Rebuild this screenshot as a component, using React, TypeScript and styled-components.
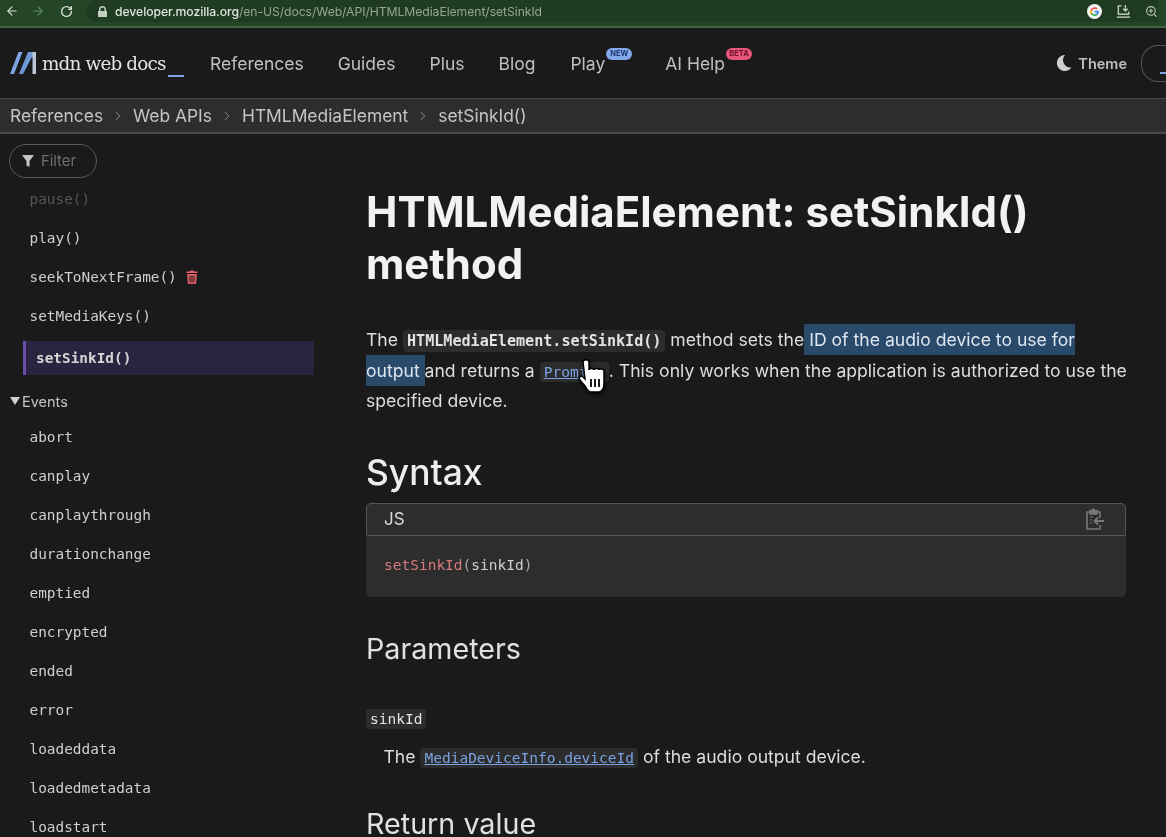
import styled, { createGlobalStyle } from "styled-components";
import { ArrowLeft, ArrowRight, ChevronRight, RotateCw, ZoomIn } from "lucide-react";

const sidebarTop = ["play()", "seekToNextFrame()", "setMediaKeys()"];
const events = [
  "abort",
  "canplay",
  "canplaythrough",
  "durationchange",
  "emptied",
  "encrypted",
  "ended",
  "error",
  "loadeddata",
  "loadedmetadata",
  "loadstart",
];
const crumbs = ["References", "Web APIs", "HTMLMediaElement", "setSinkId()"];

const GlobalStyle = createGlobalStyle`
  html, body {
    margin: 0;
    background: #1a1a1a;
    overflow: hidden;
  }
`;
const Page = styled.div`
  position: relative;
  width: 1166px;
  height: 837px;
  overflow: hidden;
  background: #1a1a1a;
  color: #e6e6e6;
  font-family: Inter, "Liberation Sans", sans-serif;
  filter: blur(0.35px);
`;
const BrowserBar = styled.div`
  height: 28px;
  box-sizing: border-box;
  display: flex;
  align-items: center;
  padding: 0 8px 4px 5px;
  background: #244526;
  border-bottom: 2px solid #3d6a3d;
  color: #c9d6c9;
`;
const BrowserButton = styled.span<{ $dim?: boolean }>`
  display: flex;
  width: 14px;
  margin-right: ${(p) => (p.$dim ? "15px" : "12px")};
  color: ${(p) => (p.$dim ? "#5f8a60" : "#d5e0d5")};
`;
const AddressPill = styled.div`
  flex: 1;
  height: 22px;
  display: flex;
  align-items: center;
  padding-left: 12px;
  border-radius: 11px 0 0 11px;
  background: #1f3c22;
  font-size: 12.2px;
  letter-spacing: -0.005em;
`;
const Host = styled.span`
  color: #dfe6df;
  font-weight: 500;
`;
const UrlPath = styled.span`
  color: #93a894;
`;
const LockIcon = styled.svg`
  width: 9px;
  height: 11px;
  margin-right: 8px;
`;
const BarIcons = styled.div`
  display: flex;
  align-items: center;
  gap: 14px;
  margin-left: auto;
  color: #bccabc;
`;
const TopNav = styled.header`
  height: 70px;
  display: flex;
  align-items: center;
  padding-left: 10px;
  background: #1a1a1a;
`;
const Logo = styled.div`
  display: flex;
  align-items: center;
  width: 200px;
`;
const LogoText = styled.span`
  margin-left: 6px;
  font-family: "DejaVu Serif", "Liberation Serif", serif;
  font-size: 18.4px;
  letter-spacing: -0.85px;
  color: #e4e4e4;
`;
const LogoCaret = styled.span`
  width: 16px;
  height: 2px;
  margin: 26px 0 0 2px;
  background: #7da5e6;
`;
const NavLinks = styled.nav`
  display: flex;
  align-items: center;
`;
const NavLink = styled.a<{ $gap: number }>`
  position: relative;
  margin-right: ${(p) => p.$gap}px;
  font-size: 17.5px;
  color: #c0c0c0;
`;
const Badge = styled.span<{ $bg: string; $ink: string }>`
  position: absolute;
  top: -5px;
  right: -27px;
  width: 26px;
  height: 12px;
  display: flex;
  align-items: center;
  justify-content: center;
  border-radius: 7px;
  background: ${(p) => p.$bg};
  color: ${(p) => p.$ink};
  font-size: 7.5px;
  font-weight: 700;
`;
const NavRight = styled.div`
  display: flex;
  align-items: center;
  margin-left: auto;
`;
const ThemeLabel = styled.span`
  margin-left: 6px;
  font-size: 14.5px;
  font-weight: 600;
  color: #c0c0c0;
`;
const SearchStub = styled.div`
  width: 24px;
  height: 35px;
  margin-left: 14px;
  position: relative;
  border: 1px solid #555;
  border-right: 0;
  border-radius: 17px 0 0 17px;

  &::after {
    content: "";
    position: absolute;
    right: 0;
    bottom: 7px;
    width: 6px;
    height: 2px;
    background: #7da5e6;
  }
`;
const Breadcrumbs = styled.div`
  height: 33px;
  display: flex;
  align-items: center;
  padding-left: 10px;
  background: #2d2d2d;
  border-top: 1px solid #4a4a4a;
  border-bottom: 2px solid #4a4a4a;
  font-size: 17.4px;
  color: #c4c4c4;
`;
const Crumb = styled.span`
  display: flex;
  align-items: center;
  white-space: nowrap;
`;
const CrumbArrow = styled.span`
  display: flex;
  width: 30px;
  justify-content: center;
  color: #9a9a9a;
`;
const Main = styled.div`
  display: flex;
  height: 703px;
`;
const Sidebar = styled.aside`
  width: 366px;
  flex: none;
  overflow: hidden;
`;
const FilterPill = styled.div`
  width: 88px;
  height: 34px;
  display: flex;
  align-items: center;
  gap: 7px;
  margin: 10px 0 0 9px;
  padding-left: 12px;
  box-sizing: border-box;
  border: 1px solid #5a5a5a;
  border-radius: 17px;
  font-size: 14.8px;
  color: #6f6f6f;
`;
const SideList = styled.ul`
  list-style: none;
  margin: 1px 0 0;
  padding: 0;
`;
const SideItem = styled.li<{ $fade?: boolean }>`
  height: 39px;
  display: flex;
  align-items: center;
  gap: 9px;
  padding-left: 29.5px;
  font-family: "DejaVu Sans Mono", "Liberation Mono", monospace;
  font-size: 14.4px;
  color: ${(p) => (p.$fade ? "#555" : "#cfcfcf")};
`;
const ActiveItem = styled.li`
  width: 291px;
  height: 34px;
  box-sizing: border-box;
  display: flex;
  align-items: center;
  margin: 6px 0 0 23px;
  padding-left: 10px;
  border-left: 3px solid #6b4fa8;
  background: #2a2440;
  font-family: "DejaVu Sans Mono", "Liberation Mono", monospace;
  font-size: 14.4px;
  font-weight: 700;
  color: #d6d6d6;
`;
const GroupTitle = styled.li`
  height: 32px;
  display: flex;
  align-items: center;
  gap: 2px;
  margin-top: 10px;
  padding-left: 10px;
  font-size: 14.5px;
  color: #c4c4c4;

  &::before {
    content: "";
    border-left: 5px solid transparent;
    border-right: 5px solid transparent;
    border-top: 8px solid #d0d0d0;
  }
`;
const Article = styled.article`
  flex: 1;
  padding-right: 36px;
`;
const Title = styled.h1`
  margin: 52px 0 0;
  font-size: 42px;
  line-height: 52px;
  font-weight: 700;
  color: #f2f2f2;
`;
const Lead = styled.p`
  margin: 35px 0 0;
  font-size: 17.6px;
  line-height: 30.5px;
  color: #dedede;
`;
const InlineCode = styled.code<{ $strong?: boolean }>`
  padding: 2px 4px;
  border-radius: 4px;
  background: #2c2c2c;
  font-family: "DejaVu Sans Mono", "Liberation Mono", monospace;
  font-size: ${(p) => (p.$strong ? "15.1px" : "14.5px")};
  font-weight: ${(p) => (p.$strong ? 700 : 400)};
  line-height: 1;
  color: #e2e2e2;
`;
const CodeLink = styled.a`
  color: #7ba2e0;
  text-decoration: underline;
`;
const Selected = styled.span`
  background: #2a4a6c;
  color: #dfe6ee;
  padding: 5px 0;
`;
const SectionTitle = styled.h2`
  margin: 34px 0 0;
  font-size: 35.4px;
  line-height: 44px;
  font-weight: 500;
  color: #ededed;
`;
const CodeBlock = styled.div`
  margin: 8px 4px 0 0;
  border-radius: 5px;
  background: #2d2d2d;
`;
const CodeHeader = styled.div`
  height: 31px;
  display: flex;
  align-items: center;
  justify-content: space-between;
  padding: 0 20px 0 17px;
  border: 1px solid #555;
  border-radius: 5px 5px 0 0;
  font-size: 17px;
  color: #d8d8d8;
`;
const CodeBody = styled.pre`
  height: 61px;
  box-sizing: border-box;
  margin: 0;
  padding: 0 0 2px 18px;
  display: flex;
  align-items: center;
  font-family: "DejaVu Sans Mono", "Liberation Mono", monospace;
  font-size: 14.5px;
  color: #a8a8a8;
`;
const FnName = styled.span`
  color: #d67a7e;
`;
const ArgName = styled.span`
  color: #cfcfcf;
`;
const SubTitle = styled.h3`
  margin: 32px 0 0;
  font-size: 28.7px;
  line-height: 40px;
  font-weight: 400;
  color: #e0e0e0;
`;
const ParamName = styled.div`
  margin-top: 39px;
  line-height: 20px;
`;
const ParamText = styled.p`
  margin: 14px 0 0 17.5px;
  font-size: 17.6px;
  line-height: 30px;
  color: #dedede;
`;
const CursorMark = styled.svg`
  position: absolute;
  left: 578px;
  top: 358px;
  width: 34px;
  height: 38px;
  filter: drop-shadow(1px 2px 2px rgba(0, 0, 0, 0.7));
`;

function LogoMark() {
  return (
    <svg width="26" height="24" viewBox="0 0 26 24">
      <path d="M0 23 L8.500 1 H12.500 L4 23Z" fill="#7da5e6" />
      <path d="M9 23 L18 1 H25 V6 H22 L13 23Z" fill="#6f97d8" />
      <path d="M22.500 1 H26 V23 H22.500Z" fill="#b9c6d8" />
    </svg>
  );
}

function GoogleMark() {
  return (
    <svg width="15" height="15" viewBox="0 0 24 24">
      <circle cx="12" cy="12" r="12" fill="#f4f4f4" />
      <path d="M19 12.2c0-.5 0-1-.1-1.4H12v2.700h4a3.400 3.400 0 0 1-1.500 2.200l2.300 1.800c1.400-1.300 2.200-3.200 2.200-5.300z" fill="#4285f4" />
      <path d="M12 19.200c1.900 0 3.500-.6 4.800-1.700l-2.300-1.800c-.7.4-1.500.7-2.500.7a4.300 4.300 0 0 1-4-3l-2.400 1.800a7.200 7.200 0 0 0 6.400 4z" fill="#34a853" />
      <path d="M8 14.400a4.300 4.300 0 0 1 0-2.800L5.600 9.700a7.200 7.200 0 0 0 0 6.500z" fill="#fbbc05" />
      <path d="M12 7.700c1.100 0 2 .4 2.800 1.100l2-2A7.200 7.200 0 0 0 5.600 9.700L8 11.600a4.300 4.300 0 0 1 4-3.900z" fill="#ea4335" />
    </svg>
  );
}

function SaveTray() {
  return (
    <svg width="15" height="15" viewBox="0 0 16 16" fill="none" stroke="currentColor" strokeWidth="1.5">
      <path d="M6 2H2.500v9h11V8" />
      <path d="M10 1v6M7.500 5 10 7.500 12.500 5" />
      <path d="M1 14h14" />
    </svg>
  );
}

function ClipboardIcon() {
  return (
    <svg width="20" height="23" viewBox="0 0 20 23" fill="none" stroke="#777" strokeWidth="1.6">
      <path d="M5 4H2v17h13v-4M15 10V4h-3" />
      <path d="M5 2.500h2.500L8.500 1l1 1.500H12V6H5z" fill="#777" />
      <path d="M19 13h-9M13 9.500 9.500 13l3.500 3.500" strokeWidth="2" />
      <path d="M5 9h3M5 12h2M5 15h2" strokeWidth="1" />
    </svg>
  );
}

function TrashIcon() {
  return (
    <svg width="12" height="14" viewBox="0 0 12 14">
      <path
        d="M4 1.500 4.600.500h2.800L8 1.500h3.500V3H.500V1.500zM1.200 4h9.600l-.6 9.200c0 .5-.4.800-.9.800H2.700c-.5 0-.9-.3-.9-.8zM3.500 5.500v7h1v-7zm2 0v7h1v-7zm2 0v7h1v-7z"
        fill="#e5606b"
        fillRule="evenodd"
      />
    </svg>
  );
}

export default function App() {
  return (
    <Page>
      <GlobalStyle />
      <BrowserBar>
        <BrowserButton>
          <ArrowLeft size={14} />
        </BrowserButton>
        <BrowserButton $dim>
          <ArrowRight size={14} />
        </BrowserButton>
        <BrowserButton>
          <RotateCw size={13} strokeWidth={2.6} />
        </BrowserButton>
        <AddressPill>
          <LockIcon viewBox="0 0 9 11">
            <path d="M1 5V3.500a3.500 3.500 0 0 1 7 0V5h1v6H0V5zm1.500 0h4V3.500a2 2 0 0 0-4 0z" fill="#c3cfc3" />
          </LockIcon>
          <Host>developer.mozilla.org</Host>
          <UrlPath>/en-US/docs/Web/API/HTMLMediaElement/setSinkId</UrlPath>
          <BarIcons>
            <GoogleMark />
            <SaveTray />
            <ZoomIn size={13} />
          </BarIcons>
        </AddressPill>
      </BrowserBar>

      <TopNav>
        <Logo>
          <LogoMark />
          <LogoText>mdn web docs</LogoText>
          <LogoCaret />
        </Logo>
        <NavLinks>
          <NavLink $gap={34}>References</NavLink>
          <NavLink $gap={34}>Guides</NavLink>
          <NavLink $gap={34}>Plus</NavLink>
          <NavLink $gap={35}>Blog</NavLink>
          <NavLink $gap={60}>
            Play
            <Badge $bg="#82a8ea" $ink="#1d3a6e">NEW</Badge>
          </NavLink>
          <NavLink $gap={0}>
            AI Help
            <Badge $bg="#e8567a" $ink="#6e1230">BETA</Badge>
          </NavLink>
        </NavLinks>
        <NavRight>
          <svg width="17" height="18" viewBox="0 0 17 18">
            <path d="M10 1a8 8 0 1 0 6.500 12.500A7.500 7.500 0 0 1 10 1z" fill="#cfcfcf" />
          </svg>
          <ThemeLabel>Theme</ThemeLabel>
          <SearchStub />
        </NavRight>
      </TopNav>

      <Breadcrumbs>
        {crumbs.map((c, i) => (
          <Crumb key={c}>
            {c}
            {i < crumbs.length - 1 && (
              <CrumbArrow>
                <ChevronRight size={14} strokeWidth={1.6} />
              </CrumbArrow>
            )}
          </Crumb>
        ))}
      </Breadcrumbs>

      <Main>
        <Sidebar>
          <FilterPill>
            <svg width="12" height="12" viewBox="0 0 12 12">
              <path d="M0 0h12L7.500 6v6l-3-1.500V6z" fill="#c4c4c4" />
            </svg>
            Filter
          </FilterPill>
          <SideList>
            <SideItem $fade>pause()</SideItem>
            {sidebarTop.map((item) => (
              <SideItem key={item}>
                {item}
                {item === "seekToNextFrame()" && <TrashIcon />}
              </SideItem>
            ))}
            <ActiveItem>setSinkId()</ActiveItem>
            <GroupTitle>Events</GroupTitle>
            {events.map((item) => (
              <SideItem key={item}>{item}</SideItem>
            ))}
          </SideList>
        </Sidebar>

        <Article>
          <Title>HTMLMediaElement: setSinkId() method</Title>
          <Lead>
            The <InlineCode $strong>HTMLMediaElement.setSinkId()</InlineCode> method sets the
            <Selected> ID of the audio device to use for output </Selected>
            and returns a{" "}
            <InlineCode>
              <CodeLink>Promise</CodeLink>
            </InlineCode>
            . This only works when the application is authorized to use the specified device.
          </Lead>
          <SectionTitle>Syntax</SectionTitle>
          <CodeBlock>
            <CodeHeader>
              JS
              <ClipboardIcon />
            </CodeHeader>
            <CodeBody>
              <span>
                <FnName>setSinkId</FnName>(<ArgName>sinkId</ArgName>)
              </span>
            </CodeBody>
          </CodeBlock>
          <SubTitle>Parameters</SubTitle>
          <ParamName>
            <InlineCode>sinkId</InlineCode>
          </ParamName>
          <ParamText>
            The{" "}
            <InlineCode>
              <CodeLink>MediaDeviceInfo.deviceId</CodeLink>
            </InlineCode>{" "}
            of the audio output device.
          </ParamText>
          <SubTitle>Return value</SubTitle>
        </Article>
      </Main>

      <CursorMark viewBox="0 0 34 38">
        <path
          d="M5 4c0-3 6-3 6 0v8c0-2 5-2 5 0 0-2 5-2 5 0 0-2 5-1 5 1v13c0 4-2 8-5 8h-8c-3 0-4-3-6-6l-5-6c-2-3 1-5 3-3l2 2z"
          fill="#fff"
          stroke="#000"
          strokeWidth="1.5"
        />
        <path d="M13 21v8M17 21v8M21 21v8" stroke="#000" strokeWidth="1.8" />
      </CursorMark>
    </Page>
  );
}
